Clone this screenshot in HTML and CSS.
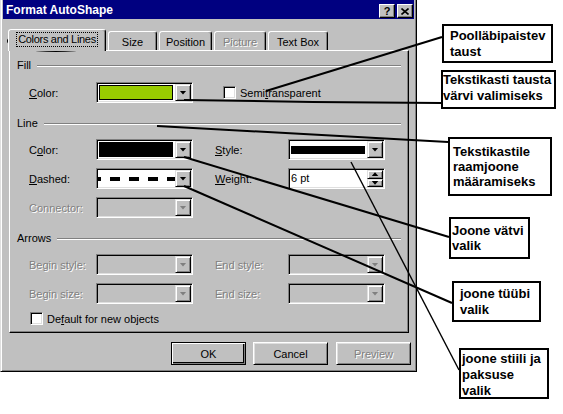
FILE: index.html
```html
<!DOCTYPE html>
<html lang="et">
<head>
    <meta charset="UTF-8">
    <meta name="viewport" content="width=device-width, initial-scale=1.0">
    <title>Format AutoShape</title>
    <link rel="stylesheet" href="styles.css">
</head>
<body>
    <div class="stage">
        <div class="dialog">
            <div class="titlebar">
                <span class="title">Format AutoShape</span>
                <div class="caption-buttons">
                    <span class="caption-btn">?</span>
                    <span class="caption-btn">
                        <svg width="8" height="7" viewBox="0 0 8 7"><path d="M0.5 0.5L7.5 6.5M7.5 0.5L0.5 6.5" stroke="#000" stroke-width="1.6"/></svg>
                    </span>
                </div>
            </div>

            <div class="tabs">
                <div class="tab active tab-colors"><span class="focus">Colors and Lines</span></div>
                <div class="tab tab-size">Size</div>
                <div class="tab tab-position">Position</div>
                <div class="tab tab-picture disabled">Picture</div>
                <div class="tab tab-textbox">Text Box</div>
            </div>

            <div class="panel">
                <div class="group-head head-fill"><span>Fill</span><div class="rule"></div></div>
                <div class="form-grid grid-fill">
                    <span class="field-label"><u>C</u>olor:</span>
                    <div class="combo">
                        <div class="combo-value"><div class="swatch swatch-green"></div></div>
                        <div class="combo-btn"><i class="arrow"></i></div>
                    </div>
                    <div class="check-field semi">
                        <span class="checkbox"></span>
                        <span>Semi<u>t</u>ransparent</span>
                    </div>
                </div>

                <div class="group-head head-line"><span>Line</span><div class="rule"></div></div>
                <div class="form-grid grid-line">
                    <span class="field-label">C<u>o</u>lor:</span>
                    <div class="combo">
                        <div class="combo-value"><div class="swatch swatch-black"></div></div>
                        <div class="combo-btn"><i class="arrow"></i></div>
                    </div>
                    <span class="field-label col-right"><u>S</u>tyle:</span>
                    <div class="combo">
                        <div class="combo-value"><div class="line-style"></div></div>
                        <div class="combo-btn"><i class="arrow"></i></div>
                    </div>

                    <span class="field-label"><u>D</u>ashed:</span>
                    <div class="combo">
                        <div class="combo-value"><div class="dash-style"></div></div>
                        <div class="combo-btn"><i class="arrow"></i></div>
                    </div>
                    <span class="field-label col-right"><u>W</u>eight:</span>
                    <div class="spin">
                        <div class="spin-value">6 pt</div>
                        <div class="spin-btns">
                            <div class="spin-btn"><i class="arrow up"></i></div>
                            <div class="spin-btn"><i class="arrow"></i></div>
                        </div>
                    </div>

                    <span class="field-label disabled">Connector:</span>
                    <div class="combo disabled">
                        <div class="combo-value"></div>
                        <div class="combo-btn"><i class="arrow"></i></div>
                    </div>
                </div>

                <div class="group-head head-arrows"><span>Arrows</span><div class="rule"></div></div>
                <div class="form-grid grid-arrows">
                    <span class="field-label disabled">Begin style:</span>
                    <div class="combo disabled">
                        <div class="combo-value"></div>
                        <div class="combo-btn"><i class="arrow"></i></div>
                    </div>
                    <span class="field-label col-right disabled">End style:</span>
                    <div class="combo disabled">
                        <div class="combo-value"></div>
                        <div class="combo-btn"><i class="arrow"></i></div>
                    </div>

                    <span class="field-label disabled">Begin size:</span>
                    <div class="combo disabled">
                        <div class="combo-value"></div>
                        <div class="combo-btn"><i class="arrow"></i></div>
                    </div>
                    <span class="field-label col-right disabled">End size:</span>
                    <div class="combo disabled">
                        <div class="combo-value"></div>
                        <div class="combo-btn"><i class="arrow"></i></div>
                    </div>
                </div>

                <div class="check-field default-check">
                    <span class="checkbox"></span>
                    <span>De<u>f</u>ault for new objects</span>
                </div>
            </div>

            <div class="dialog-buttons">
                <span class="btn default">OK</span>
                <span class="btn">Cancel</span>
                <span class="btn disabled">Preview</span>
            </div>
        </div>

        <!-- annotation lines -->
        <svg class="annotations" width="563" height="414" viewBox="0 0 563 414">
            <ellipse cx="56" cy="41" rx="48" ry="10" fill="none" stroke="#000" stroke-width="2"/>
            <g fill="none" stroke="#000" stroke-width="2">
                <path d="M266 91L442 37"/>
                <path d="M184 100L313 102L441 103"/>
                <path d="M157 126L448 142"/>
                <path d="M184 157L449 237"/>
                <path d="M184 186L452 303"/>
            </g>
            <path d="M351 162L459 370" fill="none" stroke="#000" stroke-width="1.4"/>
        </svg>

        <div class="callout c-semi">Poolläbipaistev<br>taust</div>
        <div class="callout c-fill">Tekstikasti tausta<br>värvi valimiseks</div>
        <div class="callout c-border">Tekstikastile<br>raamjoone<br>määramiseks</div>
        <div class="callout c-color">Joone vätvi<br>valik</div>
        <div class="callout c-dash">joone tüübi<br>valik</div>
        <div class="callout c-style">joone stiili ja<br>paksuse<br>valik</div>
    </div>
</body>
</html>
```

FILE: styles.css
```css
:root {
    --face: #c0c0c0;
    --light: #dfdfdf;
    --hilite: #ffffff;
    --shadow: #808080;
    --dark: #000000;
    --title: #000080;
}

body {
    margin: 0;
    background: #fff;
    font-family: 'Liberation Sans', Arial, sans-serif;
    font-size: 11px;
    color: #000;
    overflow: hidden;
}

.stage {
    position: relative;
    width: 563px;
    height: 414px;
}

/* dialog window */
.dialog {
    box-sizing: border-box;
    width: 417px;
    height: 372px;
    background: var(--face);
    border-left: 1px solid var(--light);
    border-right: 1px solid var(--dark);
    border-bottom: 1px solid var(--dark);
    box-shadow: inset 1px 0 var(--hilite), inset -1px -1px var(--shadow);
    padding: 0 2px;
}

.titlebar {
    height: 19px;
    background: var(--title);
    color: #fff;
    display: flex;
    justify-content: space-between;
    align-items: flex-start;
}

.title {
    font-weight: bold;
    font-size: 12px;
    line-height: 17px;
    padding: 2px 0 0 3px;
}

.caption-buttons {
    display: flex;
    gap: 2px;
    padding: 4px 1px 0 0;
}

.caption-btn {
    box-sizing: border-box;
    width: 16px;
    height: 14px;
    background: var(--face);
    border: 1px solid;
    border-color: var(--hilite) var(--dark) var(--dark) var(--hilite);
    box-shadow: inset -1px -1px var(--shadow);
    display: flex;
    align-items: center;
    justify-content: center;
    color: #000;
    font-weight: bold;
    font-size: 11px;
    line-height: 1;
}

/* tabs */
.tabs {
    display: flex;
    align-items: flex-end;
    gap: 2px;
    height: 21px;
    margin: 10px 0 0 5px;
}

.tab {
    box-sizing: border-box;
    height: 19px;
    background: var(--face);
    border: 1px solid;
    border-bottom: 0;
    border-color: var(--hilite) var(--dark) transparent var(--hilite);
    border-radius: 3px 3px 0 0;
    box-shadow: inset -1px 0 var(--shadow);
    display: flex;
    align-items: center;
    justify-content: center;
    padding-top: 1px;
}

.tab.active {
    height: 22px;
    margin-bottom: -1px;
    position: relative;
    z-index: 1;
    padding: 0 0 2px;
}

.tab-colors { width: 98px; }
.tab-size { width: 49px; }
.tab-position { width: 53px; }
.tab-picture { width: 52px; }
.tab-textbox { width: 60px; }

.focus {
    outline: 1px dotted #000;
    padding: 0 1px;
    line-height: 13px;
    letter-spacing: -0.3px;
    white-space: nowrap;
}

.disabled {
    color: var(--shadow);
    text-shadow: 1px 1px 0 var(--hilite);
}

/* tab page */
.panel {
    box-sizing: border-box;
    width: 400px;
    height: 283px;
    margin-left: 6px;
    border: 1px solid;
    border-color: var(--hilite) var(--dark) var(--dark) var(--hilite);
    box-shadow: inset -1px -1px var(--shadow);
    padding: 0 7px;
}

.group-head {
    display: flex;
    align-items: center;
    height: 14px;
    line-height: 14px;
}

.group-head .rule {
    flex: 1;
    margin: 1px 0 0 6px;
    border-top: 1px solid var(--shadow);
    border-bottom: 1px solid var(--hilite);
}

.head-fill { margin-top: 7px; }
.head-line { margin-top: 13px; }
.head-arrows { margin-top: 13px; }

.form-grid {
    display: grid;
    grid-template-columns: 67px 97px 22px 73px 97px;
    grid-auto-rows: 21px;
    row-gap: 8px;
    align-items: center;
    padding-left: 12px;
}

.grid-fill { margin-top: 10px; }
.grid-line { margin-top: 9px; }
.grid-arrows { margin-top: 9px; }

.field-label {
    grid-column: 1;
    white-space: nowrap;
}

.field-label.col-right {
    grid-column: 4;
}

/* combo boxes */
.combo,
.spin {
    box-sizing: border-box;
    height: 21px;
    display: flex;
    background: #fff;
    border: 1px solid;
    border-color: var(--shadow) var(--hilite) var(--hilite) var(--shadow);
    box-shadow: inset 1px 1px var(--dark), inset -1px -1px var(--light);
    padding: 1px;
}

.combo.disabled {
    background: var(--face);
}

.combo-value {
    flex: 1;
    display: flex;
    align-items: center;
    min-width: 0;
}

.combo-btn,
.spin-btn {
    box-sizing: border-box;
    width: 16px;
    background: var(--face);
    border: 1px solid;
    border-color: var(--light) var(--dark) var(--dark) var(--light);
    box-shadow: inset 1px 1px var(--hilite), inset -1px -1px var(--shadow);
    display: flex;
    align-items: center;
    justify-content: center;
}

.arrow {
    display: block;
    width: 7px;
    height: 4px;
    background: #000;
    clip-path: polygon(0 0, 100% 0, 50% 100%);
}

.arrow.up {
    clip-path: polygon(50% 0, 100% 100%, 0 100%);
}

.combo.disabled .arrow {
    background: var(--shadow);
    filter: drop-shadow(1px 1px 0 var(--hilite));
}

.swatch {
    flex: 1;
    align-self: stretch;
    margin: 1px 2px 1px 1px;
    border: 1px solid #000;
}

.swatch-green { background: #99cc00; }
.swatch-black { background: #000; }

.line-style {
    flex: 1;
    height: 8px;
    margin: 0 2px 0 1px;
    background: #000;
}

.dash-style {
    flex: 1;
    height: 4px;
    background: repeating-linear-gradient(90deg, #000 0 10px, transparent 10px 19px);
    background-position: -7px 0;
}

.spin-value {
    flex: 1;
    padding-left: 1px;
    line-height: 17px;
}

.spin-btns {
    display: flex;
    flex-direction: column;
}

.spin-btn {
    flex: 1;
}

/* check boxes */
.check-field {
    display: flex;
    align-items: center;
    gap: 4px;
    white-space: nowrap;
}

.check-field.semi {
    grid-column: 4 / 6;
    margin-left: 8px;
}

.checkbox {
    box-sizing: border-box;
    width: 13px;
    height: 13px;
    background: #fff;
    border: 1px solid;
    border-color: var(--shadow) var(--hilite) var(--hilite) var(--shadow);
    box-shadow: inset 1px 1px var(--dark), inset -1px -1px var(--light);
}

.default-check {
    margin: 8px 0 0 13px;
    height: 13px;
}

/* OK / Cancel / Preview */
.dialog-buttons {
    display: flex;
    justify-content: flex-end;
    margin: 9px 3px 0 0;
}

.btn {
    box-sizing: border-box;
    width: 75px;
    height: 23px;
    background: var(--face);
    border: 1px solid;
    border-color: var(--hilite) var(--dark) var(--dark) var(--hilite);
    box-shadow: inset 1px 1px var(--light), inset -1px -1px var(--shadow);
    display: flex;
    align-items: center;
    justify-content: center;
    margin-left: 7px;
}

.btn.default {
    border-color: var(--dark);
    box-shadow: inset 1px 1px var(--hilite), inset -1px -1px var(--shadow), inset -2px -2px var(--dark);
}

.btn.disabled {
    margin-left: 8px;
}

/* annotations laid over the screenshot */
.annotations {
    position: absolute;
    top: 0;
    left: 0;
    pointer-events: none;
}

.callout {
    position: absolute;
    box-sizing: border-box;
    background: #fff;
    border: 2px solid #000;
    font-weight: bold;
    font-size: 13px;
    line-height: 16px;
    white-space: nowrap;
}

.c-semi { left: 442px; top: 24px; width: 111px; height: 39px; padding: 2px 0 0 6px; }
.c-fill { left: 441px; top: 70px; width: 115px; height: 39px; padding: 0; }
.c-border { left: 448px; top: 137px; width: 104px; height: 59px; padding: 5px 0 0 3px; line-height: 15px; }
.c-color { left: 449px; top: 217px; width: 81px; height: 42px; padding: 4px 0 0 1px; line-height: 15px; }
.c-dash { left: 452px; top: 281px; width: 89px; height: 41px; padding: 3px 0 0 6px; }
.c-style { left: 459px; top: 348px; width: 90px; height: 51px; padding: 1px 0 0 1px; }
```
